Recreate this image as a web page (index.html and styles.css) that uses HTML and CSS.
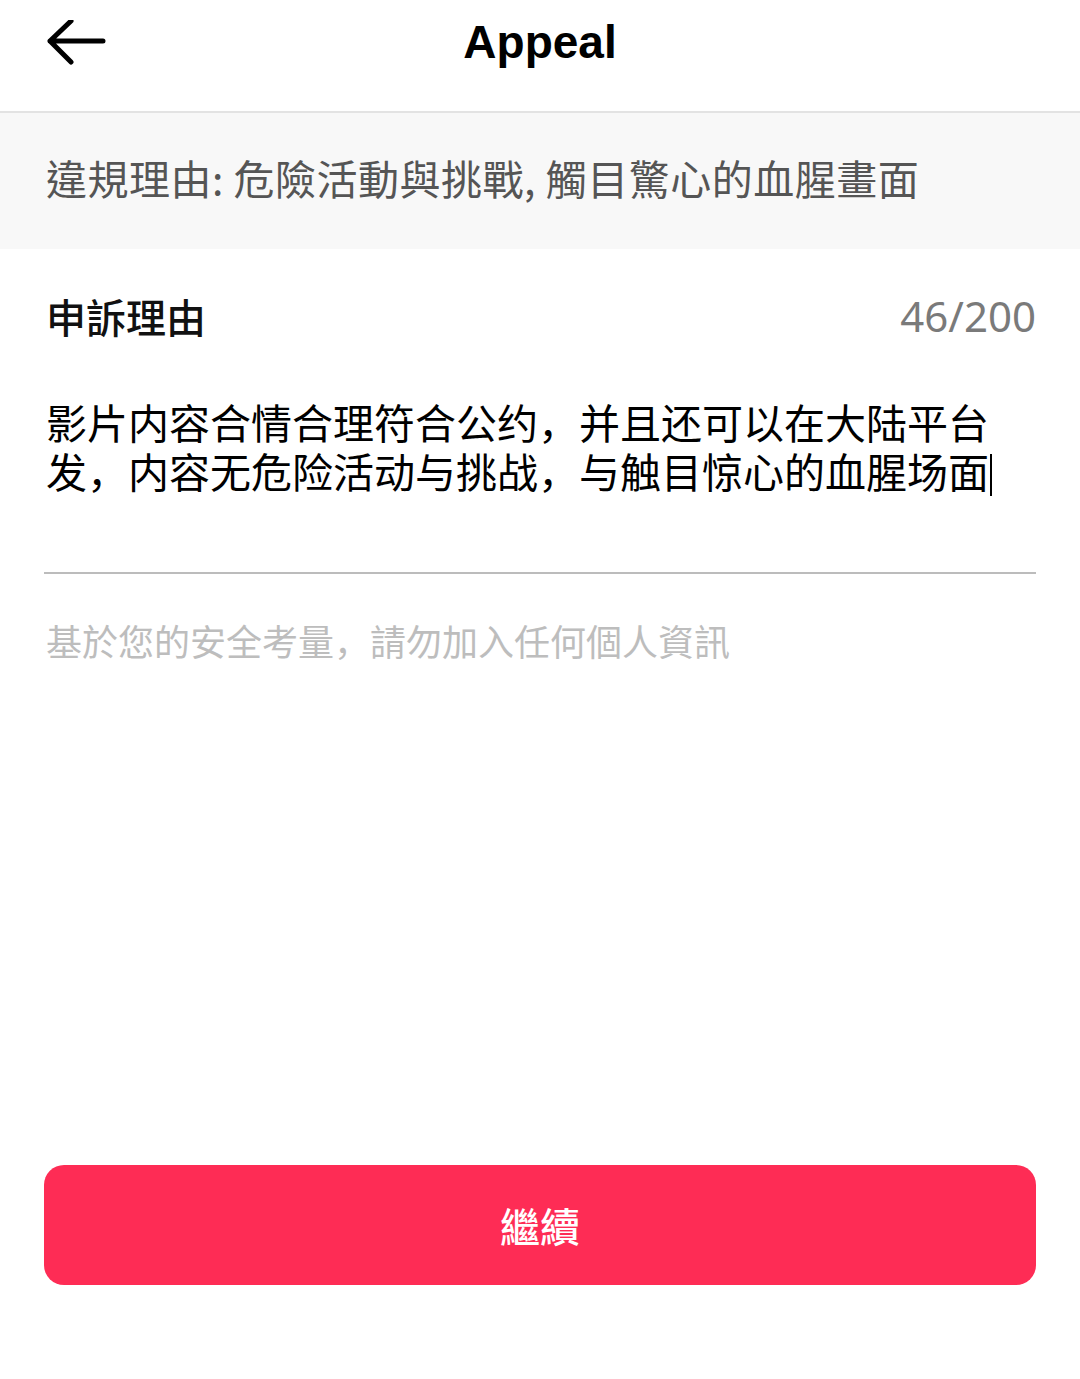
FILE: index.html
```html
<!DOCTYPE html>
<html lang="zh-Hant">
<head>
<meta charset="utf-8">
<title>Appeal</title>
<link rel="stylesheet" href="styles.css">
</head>
<body>
<div class="page">
  <header class="header">
    <div class="back">
      <svg width="60" height="48" viewBox="0 0 60 48" aria-hidden="true">
        <path d="M3 21 H56 M24 1 L3 21 L24 42" fill="none" stroke="#000" stroke-width="5" stroke-linecap="round" stroke-linejoin="round"/>
      </svg>
    </div>
    <h1 class="title">Appeal</h1>
    <div></div>
  </header>

  <div class="banner">違規理由: 危險活動與挑戰, 觸目驚心的血腥畫面</div>

  <section class="form">
    <div class="label-row">
      <span class="label">申訴理由</span>
      <span class="counter">46/200</span>
    </div>
    <p class="entry" lang="zh-Hans">影片内容合情合理符合公约，并且还可以在大陆平台发，内容无危险活动与挑战，与触目惊心的血腥场面<span class="caret"></span></p>
    <div class="divider"></div>
    <p class="hint" lang="zh-Hans">基於您的安全考量，請勿加入任何個人資訊</p>
  </section>

  <div class="spacer"></div>

  <div class="footer">
    <button class="continue" type="button">繼續</button>
  </div>
</div>
</body>
</html>
```

FILE: styles.css
```css
* {
  box-sizing: border-box;
}

html, body {
  margin: 0;
  padding: 0;
  background: #ffffff;
}

body {
  font-family: "Noto Sans CJK TC", "Noto Sans", sans-serif;
  color: #161823;
}

.page {
  min-height: 100vh;
  display: flex;
  flex-direction: column;
}

.header {
  height: 113px;
  border-bottom: 2px solid #e3e3e3;
  display: grid;
  grid-template-columns: 1fr auto 1fr;
  align-items: center;
  padding: 0 47px;
}

.back {
  display: flex;
  align-items: center;
  height: 48px;
  margin-top: -24px;
}

.title {
  margin: 0;
  margin-top: -28px;
  font-family: "Liberation Sans", Arial, sans-serif;
  font-weight: 700;
  font-size: 46px;
  line-height: 50px;
  color: #000;
}

.banner {
  background: #f8f8f8;
  height: 136px;
  padding: 0 46px 8px;
  display: flex;
  align-items: center;
  font-size: 41px;
  line-height: 50px;
  letter-spacing: 0.5px;
  color: #555555;
}

.form {
  padding: 0 44px 0 46px;
}

.label-row {
  margin-top: 42px;
  height: 50px;
  display: flex;
  justify-content: space-between;
  align-items: center;
}

.label {
  font-size: 40px;
  line-height: 50px;
  font-weight: 500;
  color: #111111;
}

.counter {
  font-family: "Noto Sans", sans-serif;
  font-size: 42px;
  line-height: 50px;
  color: #7a7a7a;
}

.entry {
  margin: 56px 0 0;
  max-width: 955px;
  font-family: "Noto Sans CJK SC", "Noto Sans", sans-serif;
  font-size: 41px;
  line-height: 49px;
  color: #000000;
}

.caret {
  display: inline-block;
  width: 2px;
  height: 42px;
  background: #000;
  vertical-align: -8px;
  margin-left: 1px;
}

.divider {
  margin-top: 76px;
  height: 2px;
  background: #bcbcbc;
  margin-left: -2px;
}

.hint {
  margin: 41px 0 0;
  font-family: "Noto Sans CJK SC", "Noto Sans CJK TC", sans-serif;
  font-size: 36px;
  line-height: 50px;
  color: #bdbdbd;
}

.spacer {
  flex: 1;
}

.footer {
  padding: 0 44px 94px;
}

.continue {
  display: block;
  width: 100%;
  height: 120px;
  border: 0;
  border-radius: 20px;
  background: #fe2c55;
  color: #ffffff;
  font-family: "Noto Sans CJK TC", sans-serif;
  font-size: 40px;
  font-weight: 500;
  line-height: 50px;
  padding: 0;
}
```
